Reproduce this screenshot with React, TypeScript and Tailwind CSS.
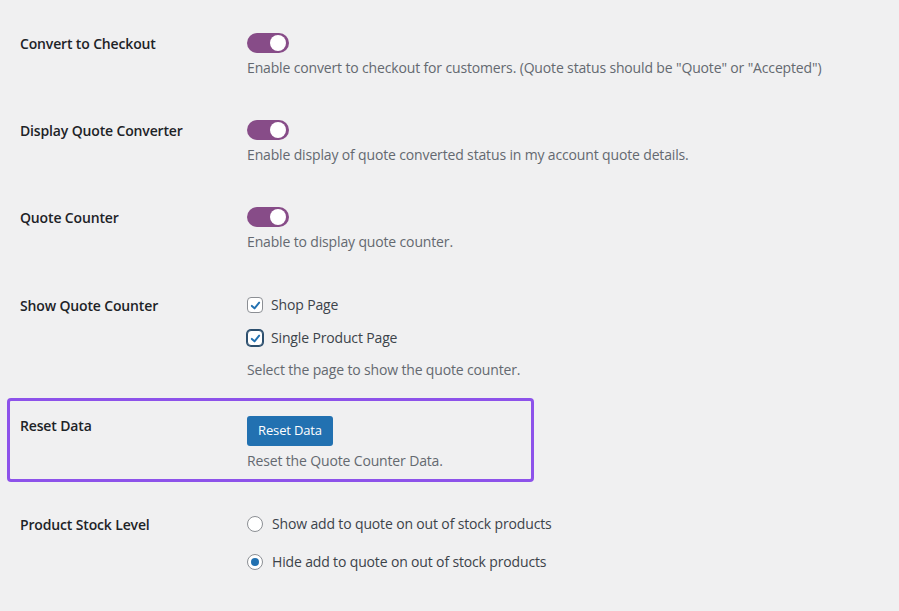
const font = { fontFamily: '"Open Sans", "Noto Sans", sans-serif' };

function Toggle() {
  return (
    <div className="w-[42px] h-5 rounded-full bg-[#874c88] flex items-center justify-end pr-[3px]">
      <div className="w-4 h-4 rounded-full bg-white" />
    </div>
  );
}

function Checkbox({ focused }: { focused?: boolean }) {
  return (
    <span
      className={[
        'w-4 h-4 rounded-[4px] bg-white flex items-center justify-center shrink-0 border',
        focused ? 'border-[#2c4f6e] shadow-[0_0_0_1px_#2c4f6e]' : 'border-[#8c8f94]',
      ].join(' ')}
    >
      <svg viewBox="0 0 16 16" className="w-[13px] h-[13px]">
        <path d="M3.5 8.5 L6.8 11.5 L12.5 4.5" fill="none" stroke="#2271b1" strokeWidth="2.4" strokeLinecap="round" strokeLinejoin="round" />
      </svg>
    </span>
  );
}

function Radio({ checked }: { checked?: boolean }) {
  return (
    <span className="w-4 h-4 rounded-full bg-white border border-[#8c8f94] flex items-center justify-center shrink-0">
      {checked && <span className="w-2 h-2 rounded-full bg-[#2271b1]" />}
    </span>
  );
}

function Label({ children }: { children: React.ReactNode }) {
  return <div className="w-[227px] shrink-0 pt-px text-[14px] leading-5 font-semibold text-[#1d2327]">{children}</div>;
}

function Desc({ children, className = '' }: { children: React.ReactNode; className?: string }) {
  return <p className={'text-[14px] leading-5 text-[#646970] ' + className}>{children}</p>;
}

function ToggleRow({ label, desc, className = '' }: { label: string; desc: string; className?: string }) {
  return (
    <div className={'flex ' + className}>
      <Label>{label}</Label>
      <div className="flex flex-col">
        <Toggle />
        <Desc className="mt-[5px]">{desc}</Desc>
      </div>
    </div>
  );
}

export default function App() {
  return (
    <div className="min-h-[611px] w-full bg-[#f0f0f1] pt-[33px] pl-5 tracking-[-0.15px]" style={font}>
      <ToggleRow
        label="Convert to Checkout"
        desc={'Enable convert to checkout for customers. (Quote status should be "Quote" or "Accepted")'}
      />
      <ToggleRow
        className="mt-[42px]"
        label="Display Quote Converter"
        desc="Enable display of quote converted status in my account quote details."
      />
      <ToggleRow className="mt-[42px]" label="Quote Counter" desc="Enable to display quote counter." />

      {/* Show Quote Counter */}
      <div className="flex mt-[43px]">
        <Label>Show Quote Counter</Label>
        <div className="flex flex-col">
          <label className="flex items-center gap-2 text-[14px] leading-5 text-[#3c434a]">
            <Checkbox />
            Shop Page
          </label>
          <label className="flex items-center gap-2 mt-[13px] text-[14px] leading-5 text-[#3c434a]">
            <Checkbox focused />
            Single Product Page
          </label>
          <Desc className="mt-[12px]">Select the page to show the quote counter.</Desc>
        </div>
      </div>

      {/* Reset Data, highlighted */}
      <div className="flex mt-[18px] -ml-[13px] w-[527px] pl-[10px] pt-[14px] pb-[8px] border-[3px] border-[#8d52ea] rounded-[4px]">
        <Label>Reset Data</Label>
        <div className="flex flex-col pt-px">
          <button className="w-[86px] h-[30px] rounded-[3px] bg-[#2271b1] text-white text-[13px] font-medium">
            Reset Data
          </button>
          <Desc className="mt-[5px]">Reset the Quote Counter Data.</Desc>
        </div>
      </div>

      {/* Product Stock Level */}
      <div className="flex mt-[32px]">
        <Label>Product Stock Level</Label>
        <div className="flex flex-col">
          <label className="flex items-center gap-[9px] text-[14px] leading-5 text-[#3c434a]">
            <Radio />
            Show add to quote on out of stock products
          </label>
          <label className="flex items-center gap-[9px] mt-[18px] text-[14px] leading-5 text-[#3c434a]">
            <Radio checked />
            Hide add to quote on out of stock products
          </label>
        </div>
      </div>
    </div>
  );
}
